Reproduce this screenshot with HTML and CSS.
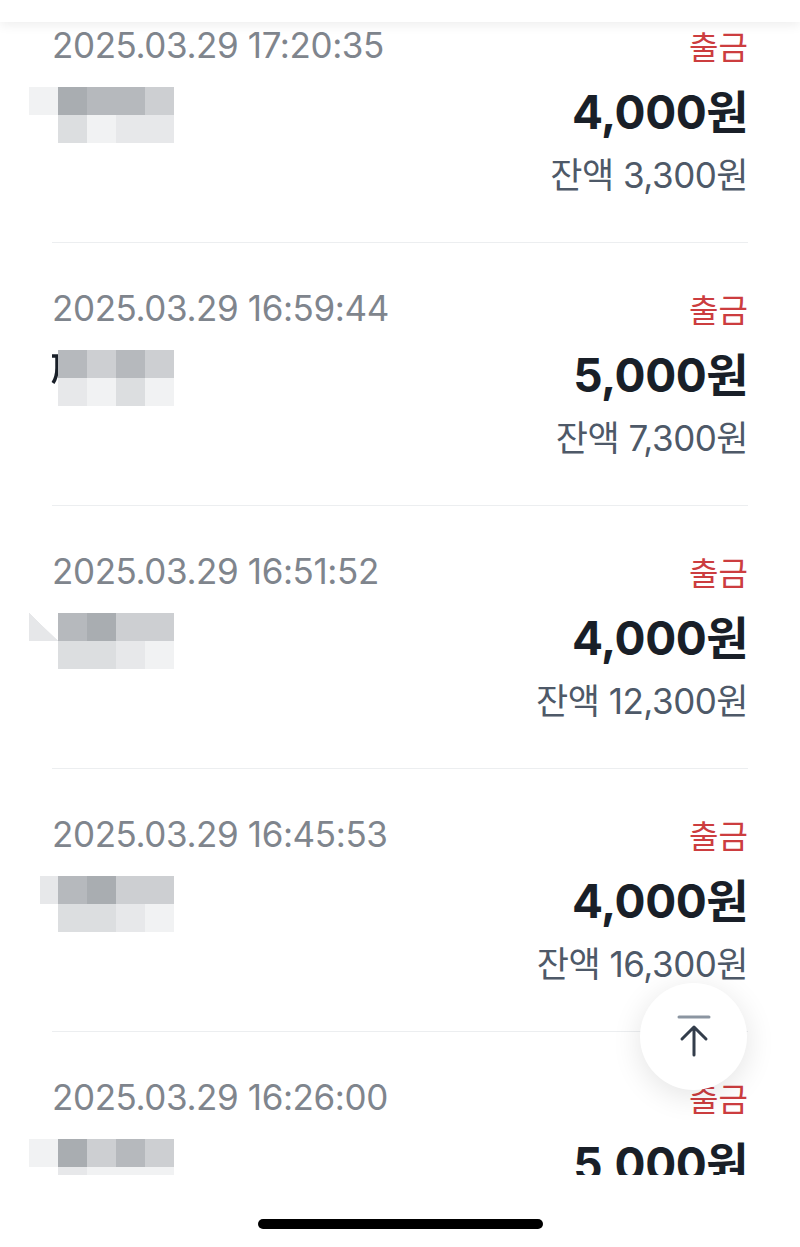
FILE: index.html
```html
<!DOCTYPE html>
<html lang="ko">
<head>
  <meta charset="UTF-8" />
  <title>거래내역</title>
  <link rel="stylesheet" href="styles.css">
</head>
<body>

  <header class="topbar"></header>

  <div class="viewport">
    <ul class="tx-list">
      <li class="tx">
        <div class="tx-head">
          <span class="tx-date">2025.03.29 17:20:35</span>
          <span class="tx-type">출금</span>
        </div>
        <div class="tx-body">
          <div class="blur">
            <i class="s6"></i><i class="s1"></i><i class="s2"></i><i class="s2"></i><i class="s3"></i>
            <i></i><i class="s4"></i><i class="s6"></i><i class="s5"></i><i class="s5"></i>
          </div>
          <div class="tx-money">
            <div class="tx-amount">4,000원</div>
            <div class="tx-balance">잔액 3,300원</div>
          </div>
        </div>
      </li>

      <li class="tx">
        <div class="tx-head">
          <span class="tx-date">2025.03.29 16:59:44</span>
          <span class="tx-type">출금</span>
        </div>
        <div class="tx-body">
          <div class="blur">
            <i class="stroke">
              <svg width="31" height="56" viewBox="0 0 31 56">
                <path d="M23 6 H28 V18 Q28 27 24 33" fill="none" stroke="#191f28" stroke-width="3.5"/>
              </svg>
            </i><i class="s2"></i><i class="s3"></i><i class="s2"></i><i class="s3"></i>
            <i class="s5"></i><i class="s6"></i><i class="s4"></i><i class="s6"></i>
          </div>
          <div class="tx-money">
            <div class="tx-amount">5,000원</div>
            <div class="tx-balance">잔액 7,300원</div>
          </div>
        </div>
      </li>

      <li class="tx">
        <div class="tx-head">
          <span class="tx-date">2025.03.29 16:51:52</span>
          <span class="tx-type">출금</span>
        </div>
        <div class="tx-body">
          <div class="blur">
            <i class="wedge"></i><i class="s2"></i><i class="s1"></i><i class="s3"></i><i class="s3"></i>
            <i></i><i class="s4"></i><i class="s4"></i><i class="s5"></i><i class="s6"></i>
          </div>
          <div class="tx-money">
            <div class="tx-amount">4,000원</div>
            <div class="tx-balance">잔액 12,300원</div>
          </div>
        </div>
      </li>

      <li class="tx">
        <div class="tx-head">
          <span class="tx-date">2025.03.29 16:45:53</span>
          <span class="tx-type">출금</span>
        </div>
        <div class="tx-body">
          <div class="blur">
            <i class="s5 short"></i><i class="s2"></i><i class="s1"></i><i class="s3"></i><i class="s3"></i>
            <i></i><i class="s4"></i><i class="s4"></i><i class="s5"></i><i class="s6"></i>
          </div>
          <div class="tx-money">
            <div class="tx-amount">4,000원</div>
            <div class="tx-balance">잔액 16,300원</div>
          </div>
        </div>
      </li>

      <li class="tx">
        <div class="tx-head">
          <span class="tx-date">2025.03.29 16:26:00</span>
          <span class="tx-type">출금</span>
        </div>
        <div class="tx-body">
          <div class="blur">
            <i class="s6"></i><i class="s1"></i><i class="s3"></i><i class="s2"></i><i class="s3"></i>
            <i></i><i class="s5"></i><i class="s6"></i><i class="s6"></i><i class="s6"></i>
          </div>
          <div class="tx-money">
            <div class="tx-amount">5,000원</div>
            <div class="tx-balance">잔액 21,300원</div>
          </div>
        </div>
      </li>
    </ul>

    <button class="to-top" aria-label="맨 위로">
      <svg width="40" height="50" viewBox="0 0 40 50">
        <line x1="5" y1="5" x2="35" y2="5" stroke="#8b95a1" stroke-width="3" stroke-linecap="round"/>
        <path d="M20 15 V43 M8 27 L20 15 L32 27" fill="none" stroke="#333d4b" stroke-width="3" stroke-linecap="round" stroke-linejoin="round"/>
      </svg>
    </button>
  </div>

  <footer class="home-bar">
    <span class="home-indicator"></span>
  </footer>

</body>
</html>
```

FILE: styles.css
```css
body {
  margin: 0;
  width: 800px;
  height: 1247px;
  overflow: hidden;
  background-color: #ffffff;
  font-family: Inter, "Noto Sans CJK KR", sans-serif;
}

/* Top bar */
.topbar {
  position: relative;
  z-index: 2;
  height: 22px;
  background-color: #ffffff;
  box-shadow: 0 3px 12px rgba(0, 0, 0, 0.07);
}

/* Scrolling list */
.viewport {
  position: relative;
  height: 1153px;
  overflow: hidden;
}

.tx-list {
  list-style: none;
  margin: -43px 0 0;
  padding: 0 52px;
}

.tx {
  border-top: 1px solid #eceef0;
  padding: 43px 0 45px;
}

.tx-head {
  display: flex;
  justify-content: space-between;
  align-items: center;
  height: 44px;
}

.tx-date {
  font-size: 35px;
  letter-spacing: -0.4px;
  color: #7f858d;
}

.tx-type {
  font-size: 32px;
  color: #cc3d3f;
}

.tx-body {
  display: flex;
  justify-content: space-between;
  margin-top: 18px;
}

.tx-money {
  text-align: right;
}

.tx-amount {
  height: 54px;
  line-height: 54px;
  font-size: 46px;
  font-weight: 700;
  letter-spacing: -0.5px;
  color: #191f28;
}

.tx-balance {
  margin-top: 14px;
  height: 44px;
  line-height: 44px;
  font-size: 35px;
  letter-spacing: -0.5px;
  color: #4e5968;
}

/* Mosaic over the name */
.blur {
  display: grid;
  grid-template-columns: repeat(5, 29px);
  grid-template-rows: 28px 28px;
  margin: 2px 0 0 -23px;
  align-self: flex-start;
}

.blur i {
  display: block;
}

.blur .s1 { background-color: #a9adb1; }
.blur .s2 { background-color: #b6b9bd; }
.blur .s3 { background-color: #cdcfd2; }
.blur .s4 { background-color: #dcdee0; }
.blur .s5 { background-color: #e7e8ea; }
.blur .s6 { background-color: #f1f2f3; }

.blur .short {
  margin-left: 11px;
}

.blur .stroke {
  grid-row: span 2;
  overflow: visible;
}

.blur .wedge {
  background: linear-gradient(to top right, #e6e7e9 50%, transparent 51%);
}

/* Scroll to top */
.to-top {
  position: absolute;
  left: 640px;
  top: 961px;
  width: 107px;
  height: 107px;
  border: none;
  border-radius: 50%;
  background-color: #ffffff;
  box-shadow: 0 6px 30px rgba(0, 0, 0, 0.11);
  display: flex;
  align-items: center;
  justify-content: center;
  padding: 0;
}

/* Bottom safe area */
.home-bar {
  height: 72px;
  display: flex;
  justify-content: center;
  align-items: flex-start;
}

.home-indicator {
  display: block;
  width: 285px;
  height: 10px;
  margin-top: 44px;
  border-radius: 5px;
  background-color: #000000;
}
```
